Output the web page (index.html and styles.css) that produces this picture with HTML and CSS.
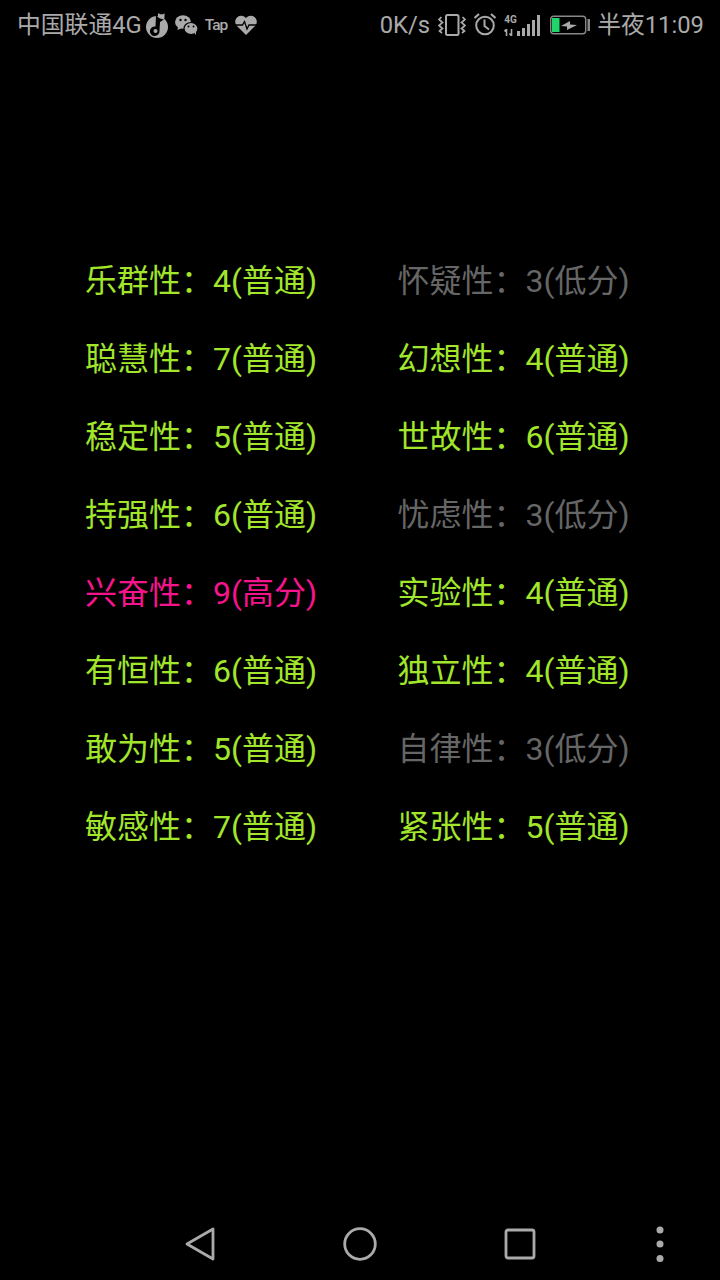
FILE: index.html
```html
<!DOCTYPE html>
<html lang="zh-CN">
<head>
<meta charset="utf-8">
<title>16PF</title>
<link rel="stylesheet" href="styles.css">
</head>
<body>
<div class="screen">
  <header class="status">
    <div class="status-side">
      <span class="carrier">中国联通4G</span>
      <svg class="ic music" viewBox="0 0 24 26"><circle cx="12" cy="15" r="11" fill="#aaa"/><path d="M13 5 L13 1 C15 3 19 2.500 19.500 1 L19.500 6 C17.500 8 15 7.500 13 7 Z" fill="#aaa"/><path d="M11 3 L14 6 C17 7.500 19 7.500 19 7.500 L15 10 L14.500 19 A4.800 4.800 0 1 1 10.500 14.500 Z" fill="#000"/><circle cx="10.500" cy="19" r="2" fill="#aaa"/></svg>
      <svg class="ic wechat" viewBox="0 0 24 20"><ellipse cx="8" cy="7" rx="8" ry="6.800" fill="#aaa"/><path d="M3 11 L2.500 15 L7 13 Z" fill="#aaa"/><ellipse cx="16" cy="13.500" rx="7" ry="6" fill="#aaa" stroke="#000" stroke-width="1.200"/><path d="M19 17.500 L21 20 L21 16 Z" fill="#aaa"/><circle cx="5.500" cy="5" r="1.200" fill="#000"/><circle cx="10.500" cy="5" r="1.200" fill="#000"/><circle cx="13.500" cy="11.500" r="1" fill="#000"/><circle cx="18.500" cy="11.500" r="1" fill="#000"/></svg>
      <span class="tap">Tap</span>
      <svg class="ic heart" viewBox="0 0 22 20"><path d="M11 20 L1.500 10.500 A5.800 5.800 0 0 1 11 3 A5.800 5.800 0 0 1 20.500 10.500 Z" fill="#aaa"/><path d="M0 10 H7.500 L9.500 6.500 L12 14 L14 10 H22" fill="none" stroke="#000" stroke-width="1.300"/></svg>
    </div>
    <div class="status-side">
      <span class="speed">0K/s</span>
      <svg class="ic vibrate" viewBox="0 0 28 22"><rect x="8" y="1" width="12.500" height="20" rx="1.500" fill="none" stroke="#aaa" stroke-width="2"/><path d="M3.500 3 L1 5.500 L4.500 8.500 L1 11.500 L4.500 14.500 L1.500 17 L4 19 M24.500 3 L27 5.500 L23.500 8.500 L27 11.500 L23.500 14.500 L26.500 17 L24 19" fill="none" stroke="#aaa" stroke-width="1.700"/></svg>
      <svg class="ic alarm" viewBox="0 0 24 24"><circle cx="12" cy="13.500" r="8.800" fill="none" stroke="#aaa" stroke-width="2"/><path d="M11.500 7.500 V14 L16 17.500" fill="none" stroke="#aaa" stroke-width="2"/><path d="M1.500 6 L6 2 M22.500 6 L18 2" stroke="#aaa" stroke-width="2.200"/></svg>
      <div class="signal">
        <div class="net"><span class="net-label">4G</span><svg class="arrows" viewBox="0 0 11 7"><path d="M2.500 0 V7 M0.500 2.500 L2.500 0 M7.500 0 V7 M5.500 4.500 L7.500 7" fill="none" stroke="#aaa" stroke-width="1.600"/></svg></div>
        <svg class="bars" viewBox="0 0 24 21"><rect x="1" y="16" width="3" height="5" fill="#aaa"/><rect x="6" y="13" width="3" height="8" fill="#aaa"/><rect x="11" y="9" width="3" height="12" fill="#aaa"/><rect x="16" y="5" width="3" height="16" fill="#aaa"/><rect x="21" y="0" width="3" height="21" fill="#aaa"/></svg>
      </div>
      <svg class="ic battery" viewBox="0 0 42 20"><rect x="1.700" y="1.200" width="35" height="17.600" rx="3" fill="none" stroke="#888" stroke-width="1.400"/><rect x="3" y="3" width="7.500" height="14" fill="#1fd66b"/><path d="M12 11 L21 6 V9.500 L28 10 L18 15 V11.500 Z" fill="#aaa"/><rect x="38.500" y="4" width="2.500" height="12" fill="#888"/></svg>
      <span class="clock">半夜11:09</span>
    </div>
  </header>

  <main class="traits">
    <div class="trait ok">乐群性：4(普通)</div>
    <div class="trait low">怀疑性：3(低分)</div>
    <div class="trait ok">聪慧性：7(普通)</div>
    <div class="trait ok">幻想性：4(普通)</div>
    <div class="trait ok">稳定性：5(普通)</div>
    <div class="trait ok">世故性：6(普通)</div>
    <div class="trait ok">持强性：6(普通)</div>
    <div class="trait low">忧虑性：3(低分)</div>
    <div class="trait high">兴奋性：9(高分)</div>
    <div class="trait ok">实验性：4(普通)</div>
    <div class="trait ok">有恒性：6(普通)</div>
    <div class="trait ok">独立性：4(普通)</div>
    <div class="trait ok">敢为性：5(普通)</div>
    <div class="trait low">自律性：3(低分)</div>
    <div class="trait ok">敏感性：7(普通)</div>
    <div class="trait ok">紧张性：5(普通)</div>
  </main>

  <nav class="navbar">
    <svg class="nav-ic" viewBox="0 0 32 36"><path d="M29 3 V33 L3 18 Z" fill="none" stroke="#aaa" stroke-width="2.800" stroke-linejoin="round"/></svg>
    <svg class="nav-ic" viewBox="0 0 36 36"><circle cx="18" cy="18" r="15.300" fill="none" stroke="#aaa" stroke-width="2.800"/></svg>
    <svg class="nav-ic" viewBox="0 0 36 36"><rect x="4" y="4" width="28" height="28" rx="2" fill="none" stroke="#aaa" stroke-width="2.800"/></svg>
    <svg class="nav-more" viewBox="0 0 10 38"><circle cx="5" cy="5" r="3.500" fill="#aaa"/><circle cx="5" cy="19" r="3.500" fill="#aaa"/><circle cx="5" cy="33.500" r="3.500" fill="#aaa"/></svg>
  </nav>
</div>
</body>
</html>
```
FILE: styles.css
```css
* { box-sizing: border-box; }
html, body { margin: 0; padding: 0; background: #000; }
.screen {
  width: 720px;
  height: 1280px;
  display: flex;
  flex-direction: column;
  position: relative;
  overflow: hidden;
  font-family: Roboto, "Noto Sans CJK SC", sans-serif;
}
.status {
  height: 50px;
  padding: 0 16px 0 17px;
  display: flex;
  justify-content: space-between;
  align-items: center;
  color: #aaa;
  font-size: 23.8px;
  line-height: 24px;
}
.status-side { display: flex; align-items: center; }
.ic { display: block; flex: none; }
.music { width: 24px; height: 26px; margin-left: 3px; margin-top: -1px; }
.wechat { width: 24px; height: 20px; margin-left: 6px; }
.tap { font-size: 15.5px; font-weight: 500; letter-spacing: -1px; margin-left: 6px; margin-top: -1px; }
.heart { width: 22px; height: 20px; margin-left: 8px; }
.vibrate { width: 28px; height: 22px; margin-left: 8px; }
.alarm { width: 24px; height: 24px; margin-left: 7px; margin-top: -2px; }
.signal { display: flex; align-items: flex-end; margin-left: 7px; height: 21px; }
.net { width: 12px; height: 21px; display: flex; flex-direction: column; justify-content: space-between; }
.net-label { font-size: 10px; line-height: 9px; font-weight: 700; }
.arrows { width: 11px; height: 7px; display: block; }
.bars { width: 24px; height: 21px; display: block; }
.battery { width: 42px; height: 20px; margin-left: 9px; }
.clock { margin-left: 6px; }
.traits {
  margin-top: 192px;
  padding-left: 85px;
  display: grid;
  grid-template-columns: 312.5px 232px;
  grid-auto-rows: 78px;
}
.trait {
  font-size: 32px;
  line-height: 78px;
  white-space: nowrap;
}
.ok { color: #a2e62c; }
.low { color: #666; }
.high { color: #f5148c; }
.navbar {
  margin-top: auto;
  height: 72px;
  position: relative;
  display: flex;
  align-items: center;
  padding-left: 182px;
  gap: 124px;
}
.nav-ic { width: 36px; height: 36px; display: block; }
.nav-more { position: absolute; left: 655px; top: 17px; width: 10px; height: 38px; }
```
